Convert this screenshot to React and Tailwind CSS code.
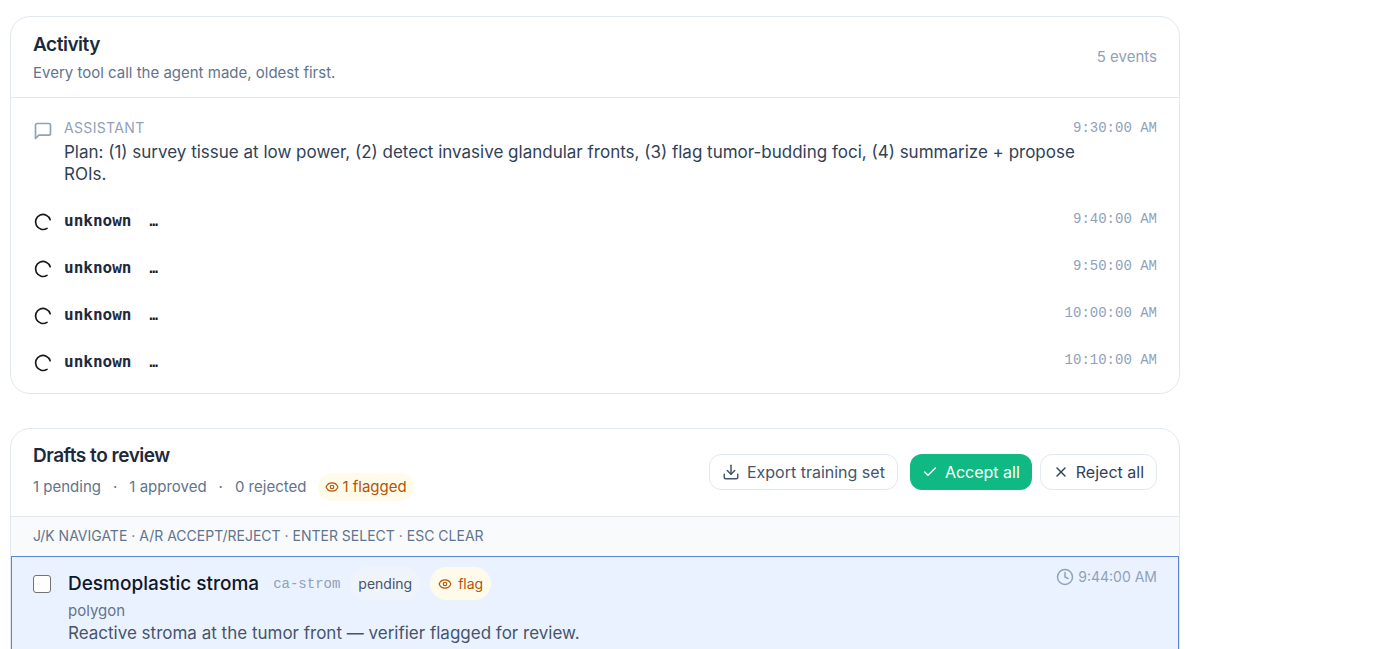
import { Check, Clock, Download, Eye, X } from "lucide-react";

const calls = ["9:40:00 AM", "9:50:00 AM", "10:00:00 AM", "10:10:00 AM"];

function MessageIcon() {
  return (
    <svg
      viewBox="0 0 24 24"
      fill="none"
      stroke="currentColor"
      strokeWidth="2"
      strokeLinecap="round"
      strokeLinejoin="round"
      className="mt-[3px] size-5 shrink-0 text-slate-400"
      aria-hidden="true"
    >
      <path d="M21 15a2 2 0 0 1-2 2H7l-4 4V5a2 2 0 0 1 2-2h14a2 2 0 0 1 2 2z" />
    </svg>
  );
}

function SpinnerIcon() {
  return (
    <svg
      viewBox="0 0 24 24"
      fill="none"
      stroke="currentColor"
      strokeWidth="2"
      strokeLinecap="round"
      className="mt-[3px] size-5 shrink-0 text-neutral-900"
      aria-hidden="true"
    >
      <path d="M20.6 9.2A9 9 0 1 0 16.8 19.6" />
    </svg>
  );
}

function Time({ children }) {
  return (
    <time className="shrink-0 font-['Liberation_Mono',monospace] text-sm leading-5 text-slate-400">
      {children}
    </time>
  );
}

function Activity() {
  return (
    <section className="rounded-[20px] border border-slate-200 bg-white">
      <header className="flex items-center justify-between border-b border-slate-200 px-[22px] py-[14px]">
        <div>
          <h2 className="text-[19px] leading-7 font-semibold tracking-tight text-slate-800">Activity</h2>
          <p className="mt-1 text-[15px] leading-5 text-slate-500">
            Every tool call the agent made, oldest first.
          </p>
        </div>
        <span className="text-[15px] leading-5 text-slate-400">5 events</span>
      </header>
      <ol className="py-2">
        <li className="flex items-start gap-[11px] px-[22px] py-3">
          <MessageIcon />
          <div className="min-w-0 flex-1">
            <div className="flex justify-between">
              <span className="text-sm leading-5 tracking-wide text-slate-400 uppercase">
                Assistant
              </span>
              <Time>9:30:00 AM</Time>
            </div>
            <p className="mt-[3px] pr-16 text-[17px] leading-[22px] text-slate-700">
              Plan: (1) survey tissue at low power, (2) detect invasive glandular fronts, (3) flag
              tumor-budding foci, (4) summarize + propose ROIs.
            </p>
          </div>
        </li>
        {calls.map((time) => (
          <li key={time} className="flex items-start gap-[11px] px-[22px] py-3">
            <SpinnerIcon />
            <div className="flex h-[23px] flex-1 items-baseline gap-[18px] font-['DejaVu_Sans_Mono',monospace] font-bold">
              <span className="text-base leading-[23px] text-slate-800">unknown</span>
              <span className="text-sm leading-[23px] text-neutral-900">…</span>
            </div>
            <Time>{time}</Time>
          </li>
        ))}
      </ol>
    </section>
  );
}

function Drafts() {
  return (
    <section className="rounded-[20px] border border-slate-200 bg-white">
      <header className="flex items-center justify-between border-b border-slate-200 px-[22px] pt-[13px] pb-[15px]">
        <div>
          <h2 className="text-[19px] leading-7 font-semibold tracking-tight text-slate-800">
            Drafts to review
          </h2>
          <div className="mt-[3px] flex items-center gap-3 text-[15px] leading-5 text-slate-500">
            <span>1 pending</span>
            <span>·</span>
            <span>1 approved</span>
            <span>·</span>
            <span>0 rejected</span>
            <span className="flex h-7 items-center gap-[3px] rounded-full bg-[#fffbeb] px-[7px] text-[#b45309]">
              <Eye className="size-[14px]" />1 flagged
            </span>
          </div>
        </div>
        <div className="flex items-center text-base">
          <button className="flex h-9 items-center gap-[7px] rounded-xl border border-slate-200 px-3 text-slate-600">
            <Download className="size-[18px]" />
            Export training set
          </button>
          <button className="ml-3 flex h-9 items-center gap-[7px] rounded-xl bg-[#10b981] px-3 text-white">
            <Check className="size-4" strokeWidth={2} />
            Accept all
          </button>
          <button className="ml-2 flex h-9 items-center gap-[7px] rounded-xl border border-slate-200 px-3 text-slate-700">
            <X className="size-4" />
            Reject all
          </button>
        </div>
      </header>
      <p className="bg-slate-50 px-[22px] pt-[9px] pb-[10px] text-sm leading-5 text-slate-500 uppercase">
        J/K navigate · A/R accept/reject · Enter select · Esc clear
      </p>
      <article className="flex items-start border border-[#5b83d6] bg-[#ebf2ff] px-[21px] pt-[10px] pb-24">
        <input
          type="checkbox"
          aria-label="Select Desmoplastic stroma"
          className="mt-2 mr-[17px] size-[18px] shrink-0 appearance-none rounded-[3px] border border-neutral-500 bg-white"
        />
        <div className="min-w-0 flex-1">
          <div className="flex items-center">
            <h3 className="text-[19px] leading-7 font-medium text-slate-900">Desmoplastic stroma</h3>
            <code className="ml-[14px] font-['Liberation_Mono',monospace] text-sm text-slate-400">
              ca-strom
            </code>
            <span className="ml-[10px] flex h-[33px] items-center rounded-full bg-[#f1f5f9]/70 px-2 text-sm text-slate-600">
              pending
            </span>
            <span className="ml-[10px] flex h-[33px] items-center gap-[6px] rounded-full bg-[#fffbeb] px-2 text-sm text-[#b45309]">
              <Eye className="size-[14px]" />
              flag
            </span>
          </div>
          <div className="text-[15px] leading-[22px] text-slate-500">polygon</div>
          <p className="text-[17px] leading-[22px] text-slate-600">
            Reactive stroma at the tumor front — verifier flagged for review.
          </p>
        </div>
        <div className="flex shrink-0 items-center gap-1 text-sm leading-5 text-slate-400">
          <Clock className="size-[18px]" />
          9:44:00 AM
        </div>
      </article>
    </section>
  );
}

export default function App() {
  return (
    <main className="h-screen overflow-hidden bg-white font-['Inter',sans-serif]">
      <div className="ml-[10px] flex max-w-[1170px] flex-col gap-[34px] pt-4">
        <Activity />
        <Drafts />
      </div>
    </main>
  );
}
